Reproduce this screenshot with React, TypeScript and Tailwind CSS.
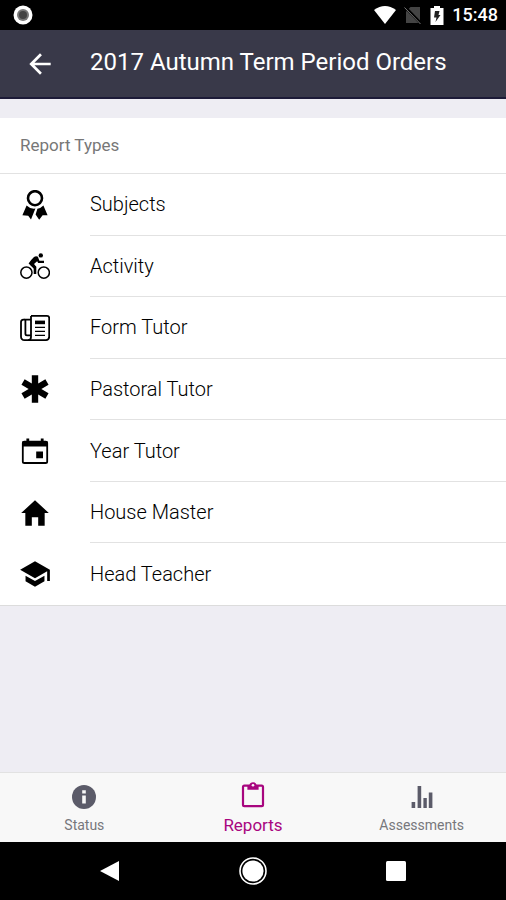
import type { ReactNode } from "react";
import { IoMdArrowBack, IoMdHome, IoMdMedical, IoMdSchool } from "react-icons/io";

const RibbonIcon = () => (
  <svg viewBox="0 0 30 30" className="size-[30px]" aria-hidden="true">
    <circle cx="15" cy="8.2" r="7" fill="none" stroke="currentColor" strokeWidth="2.6" />
    <path d="M6.6 15.6Q10.4 19.4 15.4 18.6L11 29.6 8.2 25.8 2.4 25.2Z" fill="currentColor" />
    <path d="M17.4 18.8Q21 18.2 23.4 15.6L27.6 25.2 22.6 25.2 19.2 29.8 15.6 24.4Z" fill="currentColor" />
  </svg>
);

const BicycleIcon = () => (
  <svg viewBox="0 0 30 30" className="size-[30px]" aria-hidden="true">
    <g fill="none" stroke="currentColor">
      <circle cx="6.4" cy="21.6" r="5.6" strokeWidth="1.5" />
      <circle cx="23.8" cy="21.6" r="5.6" strokeWidth="1.5" />
      <path d="M16.8 7.4 18.8 10.8H24" strokeWidth="2.2" />
      <path d="M11.4 13 15 16.6V23" strokeWidth="2.6" />
    </g>
    <path d="M8.6 12.6Q10.4 9.4 14 6 16 4.6 18 5.8L18.8 8.8 14 13 16.4 16 14.2 18Z" fill="currentColor" />
    <circle cx="20.8" cy="4.4" r="2.2" fill="currentColor" />
  </svg>
);

const PaperIcon = () => (
  <svg viewBox="0 0 30 30" className="size-[30px]" aria-hidden="true">
    <g fill="none" stroke="currentColor" strokeWidth="1.8">
      <path d="M11 2.9H27Q29.2 2.9 29.2 5V23.6Q29.2 27.1 26 27.1H4.6Q1 27.1 1 23.4V9.2Q1 6.6 3.4 6.6H5" />
      <path d="M11 2.9V24Q11 27.1 8 27.1" />
      <path d="M11 6.6H5.4V20.8Q5.4 22.4 7 22.4H11" />
    </g>
    <path d="M15 7.6H25V11.2H15Z" fill="currentColor" />
    <path d="M15 14.4H25M15 18.4H25M15 22.4H25" stroke="currentColor" strokeWidth="1.3" />
  </svg>
);

const CalendarIcon = () => (
  <svg viewBox="0 0 28 28" className="size-7" aria-hidden="true">
    <path d="M3.4 4.6H24.6Q26.2 4.6 26.2 6.2V24.4Q26.2 26 24.6 26H3.4Q1.8 26 1.8 24.4V6.2Q1.8 4.6 3.4 4.6Z" fill="none" stroke="currentColor" strokeWidth="1.8" />
    <path d="M1.4 4.2H26.6V9.6H1.4ZM5.4 1.4H8.2V5H5.4ZM19.8 1.4H22.6V5H19.8ZM15.2 14.4H22V21.2H15.2Z" fill="currentColor" />
  </svg>
);

const InfoIcon = () => (
  <svg viewBox="0 0 28 28" className="size-7 text-[#5b5b69]" aria-hidden="true">
    <circle cx="14" cy="14" r="12" fill="currentColor" />
    <path d="M12.2 12.4H15.8V20.4H12.2ZM12.2 7.2H15.8V10.4H12.2Z" fill="#f8f8f8" />
  </svg>
);

const ClipboardIcon = () => (
  <svg viewBox="0 0 24 28" className="h-7 w-6" fill="none" stroke="currentColor" aria-hidden="true">
    <path d="M3.4 4.6H20.6Q22 4.6 22 6V23.8Q22 25.2 20.6 25.2H3.4Q2 25.2 2 23.8V6Q2 4.6 3.4 4.6Z" strokeWidth="2.2" />
    <path d="M6.4 4H8.4A3.7 3.7 0 0 1 15.6 4H17.6V8.8H6.4Z" fill="currentColor" stroke="none" />
    <circle cx="12" cy="4.2" r="1.3" fill="#f8f8f8" stroke="none" />
  </svg>
);

const StatsIcon = () => (
  <svg viewBox="0 0 22 24" className="h-7 w-[22px] text-[#5b5b69]" fill="currentColor" aria-hidden="true">
    <path d="M.6 17H4.2V23H.6ZM6.6 1H10.2V23H6.6ZM12.4 13H15.8V23H12.4ZM17.8 7.4H21.4V23H17.8Z" />
  </svg>
);

const reportTypes: { label: string; icon: ReactNode }[] = [
  { label: "Subjects", icon: <RibbonIcon /> },
  { label: "Activity", icon: <BicycleIcon /> },
  { label: "Form Tutor", icon: <PaperIcon /> },
  { label: "Pastoral Tutor", icon: <IoMdMedical size={34} className="shrink-0" /> },
  { label: "Year Tutor", icon: <CalendarIcon /> },
  { label: "House Master", icon: <IoMdHome size={34} className="shrink-0" /> },
  { label: "Head Teacher", icon: <IoMdSchool size={34} className="shrink-0" /> },
];

const StatusBar = () => (
  <div className="flex h-[30px] items-center justify-between bg-black pr-2 pl-[13px] text-white">
    <svg viewBox="0 0 20 20" className="size-5" aria-hidden="true">
      <circle cx="10" cy="10" r="9.5" fill="#fff" />
      <circle cx="10" cy="10" r="6" fill="#777" />
      <circle cx="10" cy="10" r="4" fill="#444" />
    </svg>
    <div className="flex items-center gap-2">
      <svg viewBox="0 0 22 18" className="h-[18px] w-[22px]" fill="currentColor" aria-hidden="true">
        <path d="M11 18 0 4Q11 -4 22 4Z" />
      </svg>
      <svg viewBox="0 0 18 18" className="size-[18px]" aria-hidden="true">
        <path d="M6.5 1H16V17H2V5.5Z" fill="#444" />
        <path d="M1 1 17 17.5" stroke="#000" strokeWidth="3" />
        <path d="M.5 1.5 16.5 18" stroke="#777" strokeWidth="1" />
      </svg>
      <svg viewBox="0 0 14 19" className="h-[19px] w-3.5" aria-hidden="true">
        <path d="M4 0H10V2H13.5V19H.5V2H4Z" fill="#fff" />
        <path d="M5 5H9.5L8.5 9H10.5L5.5 16 6.5 11.5H4Z" fill="#222" />
      </svg>
      <span className="text-lg leading-5 font-medium">15:48</span>
    </div>
  </div>
);

const tabClass = "flex flex-1 flex-col items-center pt-2.5";

export default function App() {
  return (
    <div className="flex min-h-screen flex-col bg-[#eeedf3] font-['Roboto','Liberation_Sans',sans-serif]">
      <StatusBar />
      <header className="flex h-[69px] items-center border-b-2 border-[#1d1b38] bg-[#393949] pl-6 text-white">
        <button type="button" aria-label="Back" className="mr-[34px]">
          <IoMdArrowBack size={32} />
        </button>
        <h1 className="pb-1 text-2xl">2017 Autumn Term Period Orders</h1>
      </header>

      <main className="flex-1 pt-[19px]">
        <section className="border-b border-[#dcdcdc] bg-white">
          <h2 className="flex h-14 items-center border-b border-[#e2e2e2] px-5 text-[17px] text-[#777]">Report Types</h2>
          <ul className="grid min-h-[431px] auto-rows-fr">
            {reportTypes.map(({ label, icon }) => (
              <li key={label} className="group flex">
                <button type="button" className="flex flex-1 items-stretch pl-5 text-left">
                  <span className="flex w-[30px] items-center justify-center">{icon}</span>
                  <span className="ml-10 flex flex-1 items-center border-b border-[#e2e2e2] text-xl font-light text-black group-last:border-0">
                    {label}
                  </span>
                </button>
              </li>
            ))}
          </ul>
        </section>
      </main>

      <nav className="flex h-[70px] border-t border-[#e2e2e2] bg-[#f8f8f8] text-sm text-[#77777c]">
        <button type="button" className={tabClass}>
          <InfoIcon />
          <span className="mt-1">Status</span>
        </button>
        <button type="button" aria-current="page" className="flex flex-1 flex-col items-center pt-2 text-[17px] leading-6 text-[#a8067f]">
          <ClipboardIcon />
          <span className="mt-1">Reports</span>
        </button>
        <button type="button" className={tabClass}>
          <StatsIcon />
          <span className="mt-1">Assessments</span>
        </button>
      </nav>

      <div className="flex h-[58px] items-center justify-around bg-black px-10 text-white">
        <button type="button" aria-label="Back">
          <svg viewBox="0 0 20 22" className="h-[22px] w-5" fill="currentColor">
            <path d="M0 11 19 1V21Z" />
          </svg>
        </button>
        <button type="button" aria-label="Home">
          <svg viewBox="0 0 28 28" className="size-7">
            <circle cx="14" cy="14" r="13" fill="none" stroke="currentColor" strokeWidth="1.6" />
            <circle cx="14" cy="14" r="10.6" fill="currentColor" />
          </svg>
        </button>
        <button type="button" aria-label="Recent apps">
          <svg viewBox="0 0 20 20" className="size-5" fill="currentColor">
            <rect width="20" height="20" rx="1.5" />
          </svg>
        </button>
      </div>
    </div>
  );
}
